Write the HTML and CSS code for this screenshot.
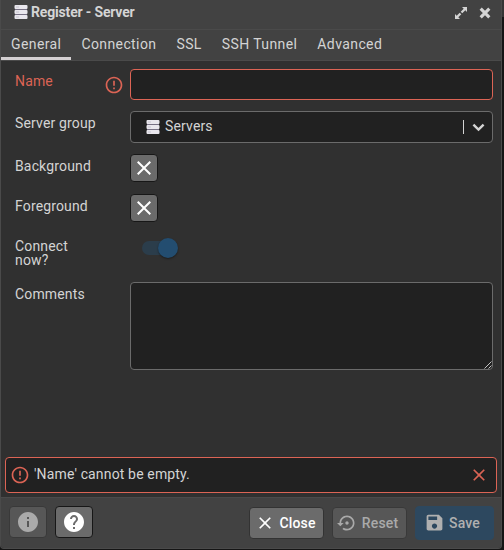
FILE: index.html
```html
<!DOCTYPE html>
<html lang="en">
<head>
<meta charset="utf-8">
<title>Register - Server</title>
<link rel="stylesheet" href="styles.css">
</head>
<body>
<svg class="defs" width="0" height="0" aria-hidden="true">
  <symbol id="server" viewBox="0 0 14 16">
    <rect x="1" y="2" width="12" height="12" fill="#777184"/>
    <rect x=".5" y="1" width="13" height="4" rx="1" fill="#e9e7ed"/>
    <rect x=".5" y="6" width="13" height="4" rx="1" fill="#e9e7ed"/>
    <rect x=".5" y="11" width="13" height="4" rx="1" fill="#e9e7ed"/>
    <path d="M1 5.500h12M1 10.500h12" stroke="#777184"/>
    <path d="M2 3h3M2 8h3M2 13h3" stroke="#c8c4d0"/>
  </symbol>
  <symbol id="error" viewBox="0 0 24 24">
    <path fill="currentColor" d="M11 15h2v2h-2zm0-8h2v6h-2zm.99-5C6.47 2 2 6.48 2 12s4.47 10 9.99 10C17.52 22 22 17.52 22 12S17.52 2 11.99 2zM12 20c-4.42 0-8-3.58-8-8s3.58-8 8-8 8 3.58 8 8-3.58 8-8 8z"/>
  </symbol>
  <symbol id="close" viewBox="0 0 24 24">
    <path fill="currentColor" d="M19 6.41 17.59 5 12 10.59 6.41 5 5 6.41 10.59 12 5 17.59 6.41 19 12 13.41 17.59 19 19 17.59 13.41 12z"/>
  </symbol>
</svg>
<main class="dialog">
  <header class="header">
    <svg class="server-icon"><use href="#server"/></svg>
    <h1 class="title">Register - Server</h1>
    <svg class="expand" viewBox="0 0 14 14"><path fill="currentColor" d="M8 1h5v5l-1.7-1.7-3 3-1.6-1.6 3-3zM6 13H1V8l1.7 1.7 3-3 1.6 1.6-3 3z"/></svg>
    <svg class="dismiss" viewBox="0 0 10 10"><path d="m1.400 1.400 7.200 7.200m0-7.200L1.400 8.600" stroke="currentColor" stroke-width="2.600"/></svg>
  </header>
  <nav class="tabs">
    <a class="tab active">General</a><a class="tab">Connection</a><a class="tab">SSL</a><a class="tab">SSH Tunnel</a><a class="tab">Advanced</a>
  </nav>
  <section class="form">
    <div class="row name"><label class="label invalid">Name</label><svg class="error-icon"><use href="#error"/></svg><div class="input"></div></div>
    <div class="row group"><label class="label">Server group</label>
      <div class="select"><svg class="server-icon"><use href="#server"/></svg><span>Servers</span><i class="separator"></i><svg class="chevron" viewBox="0 0 12 8"><path d="m1.3 1.3 4.7 4.7 4.7-4.7" fill="none" stroke="currentColor" stroke-width="2.2"/></svg></div>
    </div>
    <div class="row color"><label class="label">Background</label><div class="swatch"><svg><use href="#close"/></svg></div></div>
    <div class="row color"><label class="label">Foreground</label><div class="swatch"><svg><use href="#close"/></svg></div></div>
    <div class="row connect"><label class="label">Connect now?</label><div class="switch"><i class="thumb"></i></div></div>
    <div class="row comments"><label class="label">Comments</label>
      <div class="textarea"><svg class="grip" viewBox="0 0 8 8"><path d="M.5 7.5l7-7M4.5 7.5l3-3" stroke="#c4c4c4"/></svg></div>
    </div>
  </section>
  <div class="alert"><svg class="error-icon"><use href="#error"/></svg><span>'Name' cannot be empty.</span><svg class="alert-close"><use href="#close"/></svg></div>
  <footer class="footer">
    <div class="button icon disabled"><svg viewBox="0 0 24 24"><path fill="currentColor" d="M12 2C6.48 2 2 6.48 2 12s4.48 10 10 10 10-4.48 10-10S17.52 2 12 2zm1 15h-2v-6h2v6zm0-8h-2V7h2v2z"/></svg></div>
    <div class="button icon"><svg viewBox="0 0 24 24"><path fill="currentColor" d="M12 2C6.48 2 2 6.48 2 12s4.48 10 10 10 10-4.48 10-10S17.52 2 12 2zm1 17h-2v-2h2v2zm2.07-7.75-.9.92C13.45 12.9 13 13.5 13 15h-2v-.5c0-1.1.45-2.1 1.17-2.83l1.24-1.26c.37-.36.59-.86.59-1.41 0-1.1-.9-2-2-2s-2 .9-2 2H8c0-2.21 1.79-4 4-4s4 1.79 4 4c0 .88-.36 1.68-.93 2.25z"/></svg></div>
    <div class="button text close-button"><svg><use href="#close"/></svg><span>Close</span></div>
    <div class="button text reset disabled"><svg viewBox="0 0 24 24"><path fill="currentColor" d="M14 12c0-1.100-.9-2-2-2s-2 .9-2 2 .9 2 2 2 2-.9 2-2zm-2-9c-4.970 0-9 4.030-9 9H0l4 4 4-4H5c0-3.870 3.130-7 7-7s7 3.130 7 7-3.130 7-7 7c-1.510 0-2.910-.49-4.060-1.300l-1.420 1.440C8.040 20.300 9.940 21 12 21c4.970 0 9-4.030 9-9s-4.030-9-9-9z"/></svg><span>Reset</span></div>
    <div class="button text save"><svg viewBox="0 0 24 24"><path fill="currentColor" d="M17 3H5c-1.110 0-2 .9-2 2v14c0 1.100.89 2 2 2h14c1.100 0 2-.9 2-2V7l-4-4zm-5 16c-1.660 0-3-1.340-3-3s1.340-3 3-3 3 1.340 3 3-1.340 3-3 3zm3-10H5V5h10v4z"/></svg><span>Save</span></div>
  </footer>
</main>
</body>
</html>
```
FILE: styles.css
```css
* { box-sizing: border-box; }
body {
  margin: 0;
  height: 550px;
  overflow: hidden;
  background: linear-gradient(#353535 17px, #151515 17px);
  color: #d4d4d4;
  font: 14px/18px Roboto, sans-serif;
  letter-spacing: .15px;
}
svg { display: block; flex: none; }
.defs { position: absolute; }
.dialog {
  display: flex;
  flex-direction: column;
  width: 502px;
  height: 549px;
  border: 1px solid #4a4a4a;
  border-top: 0;
  border-radius: 0 0 4px 4px;
  background: #303030;
  overflow: hidden;
}
.header {
  display: flex;
  align-items: center;
  height: 30px;
  padding: 0 10px 3px 13px;
  border-bottom: 1px solid #4a4a4a;
  background: #424242;
}
.server-icon { width: 14px; height: 16px; }
.header .server-icon { margin-bottom: 2px; }
.title { flex: 1; margin: 0 0 1px 3px; padding-bottom: 1px; font-size: 14px; line-height: 18px; font-weight: 700; letter-spacing: -.17px; }
.expand { width: 14px; height: 14px; margin-right: 11px; }
.dismiss { width: 12px; height: 12px; }
.tabs {
  display: flex;
  height: 31px;
  border-bottom: 1px solid #4a4a4a;
  background: #424242;
}
.tab { padding: 5px 10px 0; border-bottom: 3px solid transparent; letter-spacing: .4px; }
.active { border-color: #d4d0d2; }
.form { padding: 8px 8px 0 14px; }
.row { display: flex; align-items: flex-start; }
.label { width: 91px; padding-top: 3px; }
.invalid { color: #dc6455; }
.error-icon { width: 20px; height: 20px; color: #dc6455; }
.name .error-icon { margin: 6px 6px 0 -2px; }
.input { flex: 1; height: 31px; border: 1px solid #dc6455; border-radius: 4px; background: #212121; }
.group { margin-top: 11px; }
.group .label, .color .label, .connect .label, .comments .label { width: 115px; flex: none; }
.select {
  display: flex;
  align-items: center;
  flex: 1;
  height: 32px;
  padding: 0 7px 2px 15px;
  border: 1px solid #6b6b6b;
  border-radius: 4px;
  background: #212121;
}
.select span { flex: 1; margin-left: 5px; }
.select .server-icon { margin-top: 1px; height: 16px; }
.separator { width: 1px; height: 14px; margin-top: 2px; background: #d4d4d4; }
.chevron { width: 13px; height: 9px; margin: 3px 0 0 8px; }
.color { height: 28px; margin-top: 11px; }
.color + .color { margin-top: 12px; }
.swatch {
  display: grid;
  place-items: center;
  width: 28px;
  height: 28px;
  border: 1px solid #171717;
  border-radius: 4px;
  background: #6b6b6b;
  color: #fff;
}
.swatch svg { width: 24px; height: 24px; }
.connect { height: 40px; margin-top: 17px; }
.connect .label { padding: 0 35px 0 0; line-height: 14px; }
.switch { width: 34px; height: 14px; margin: 2px 0 0 12px; border-radius: 7px; background: #2b3d4b; }
.thumb {
  display: block;
  width: 20px;
  height: 20px;
  margin: -3px 0 0 16px;
  border-radius: 50%;
  background: #234d70;
  box-shadow: 0 1px 2px #0006;
}
.comments { margin-top: 3px; }
.textarea {
  display: flex;
  align-items: flex-end;
  justify-content: flex-end;
  flex: 1;
  height: 88px;
  border: 1px solid #6b6b6b;
  border-radius: 4px;
  background: #212121;
}
.grip { width: 8px; height: 8px; }
.alert {
  display: flex;
  align-items: center;
  height: 36px;
  margin: auto 4px 4px;
  padding: 0 7px 0 4px;
  border: 1px solid #dc6455;
  border-radius: 4px;
  background: #212121;
}
.alert span { flex: 1; margin-left: 4px; padding-bottom: 2px; }
.alert-close { width: 20px; height: 20px; color: #dc6455; }
.footer {
  display: flex;
  align-items: center;
  height: 51px;
  padding: 0 7px 2px 8px;
  border-top: 1px solid #4a4a4a;
  background: #424242;
}
.button {
  display: flex;
  align-items: center;
  justify-content: center;
  height: 32px;
  border: 1px solid #171717;
  border-radius: 4px;
  background: #6b6b6b;
  color: #fff;
}
.icon { width: 38px; margin-right: 8px; }
.icon svg { width: 24px; height: 24px; }
.disabled { border-color: #393939; background: #575757; color: #aaa; }
.text { width: 75px; margin: 1px 8px 0 0; padding-right: 2px; font-weight: 500; }
.text svg { width: 20px; height: 20px; margin-right: 4px; }
.close-button { margin-left: auto; border-color: #333; }
.reset { padding-right: 4px; }
.reset svg { margin-right: 5px; }
.text.save { width: 79px; height: 34px; margin-right: 0; padding-right: 5px; border-color: #2d485f; background: #2d485f; color: #b0b0b0; }
.save svg { width: 21px; height: 21px; }
```
